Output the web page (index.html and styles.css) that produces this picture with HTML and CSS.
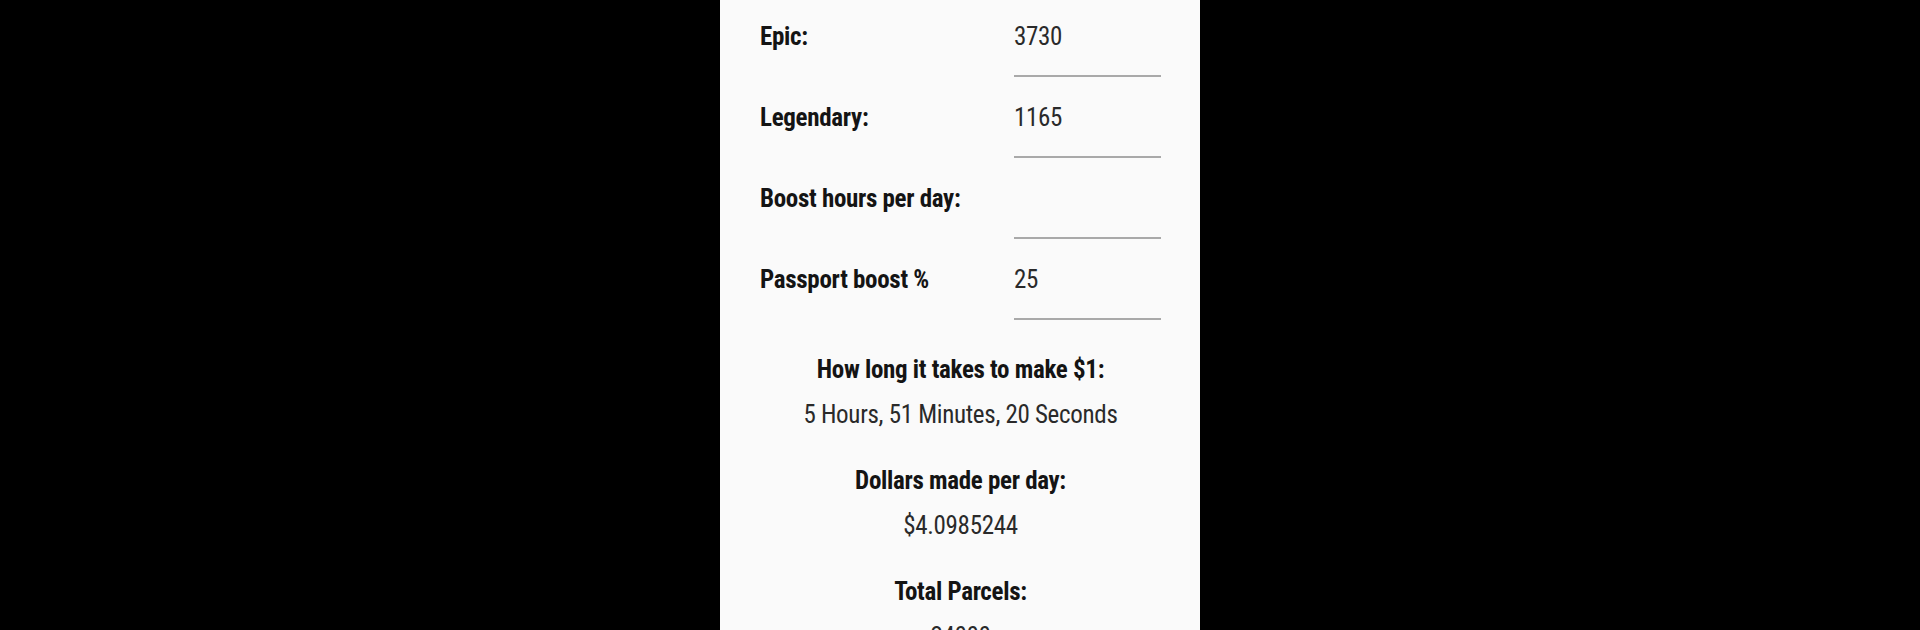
FILE: index.html
```html
<!DOCTYPE html>
<html lang="en">
<head>
<meta charset="utf-8">
<title>Calculator</title>
<link rel="stylesheet" href="styles.css">
</head>
<body>
<main class="panel">
  <div class="row">
    <span class="label">Epic:</span>
    <span class="field">3730</span>
  </div>
  <div class="row">
    <span class="label">Legendary:</span>
    <span class="field">1165</span>
  </div>
  <div class="row">
    <span class="label">Boost hours per day:</span>
    <span class="field"></span>
  </div>
  <div class="row">
    <span class="label">Passport boost %</span>
    <span class="field">25</span>
  </div>
  <section class="results">
    <div class="group">
      <p class="title">How long it takes to make $1:</p>
      <p class="value">5 Hours, 51 Minutes, 20 Seconds</p>
    </div>
    <div class="group">
      <p class="title">Dollars made per day:</p>
      <p class="value">$4.0985244</p>
    </div>
    <div class="group">
      <p class="title">Total Parcels:</p>
      <p class="value">24000</p>
    </div>
  </section>
</main>
</body>
</html>
```
FILE: styles.css
```css
html, body {
  margin: 0;
  padding: 0;
  background: #000;
  height: 100%;
  overflow: hidden;
}
body {
  display: flex;
  justify-content: center;
  font-family: "Roboto", "Liberation Sans", sans-serif;
  font-stretch: 75%;
  font-size: 25px;
  letter-spacing: -0.3px;
}
.panel {
  width: 480px;
  background: #fafafa;
  min-height: 100%;
  padding: 0 39px 0 40px;
  box-sizing: border-box;
}
.row {
  display: flex;
  height: 81px;
}
.label {
  width: 254px;
  padding-top: 22px;
  line-height: 30px;
  font-weight: 700;
  color: #141414;
}
.field {
  width: 147px;
  height: 53px;
  padding-top: 22px;
  line-height: 30px;
  color: #2a2a2a;
  border-bottom: 2px solid #a9a9a9;
}
.results {
  padding-top: 23px;
  text-align: center;
}
.group {
  margin-bottom: 21px;
}
.group p {
  margin: 0;
  line-height: 45px;
}
.title {
  font-weight: 700;
  color: #141414;
}
.value {
  color: #2a2a2a;
}
```
